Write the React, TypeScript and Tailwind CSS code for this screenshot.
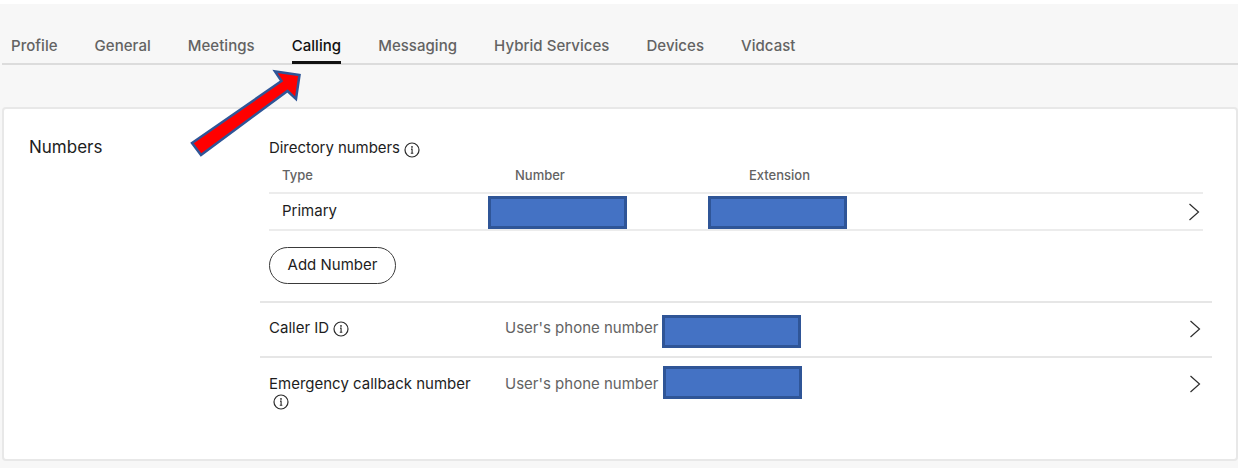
const tabs = ['Profile', 'General', 'Meetings', 'Calling', 'Messaging', 'Hybrid Services', 'Devices', 'Vidcast']

function InfoIcon({ className = '' }: { className?: string }) {
  return (
    <svg width="16" height="16" viewBox="0 0 16 16" fill="none" className={className}>
      <circle cx="8" cy="8" r="7" stroke="#2b2b2b" strokeWidth="1.2" />
      <circle cx="8" cy="4.9" r="0.9" fill="#2b2b2b" />
      <path d="M7 7.1h1.1v4M6.8 11.2h2.5" stroke="#2b2b2b" strokeWidth="1.1" />
    </svg>
  )
}

function Chevron() {
  return (
    <svg width="12" height="18" viewBox="0 0 12 18" fill="none">
      <path d="M1.5 1l9 8-9 8" stroke="#2d2d2d" strokeWidth="1.2" />
    </svg>
  )
}

function Redacted({ className = '' }: { className?: string }) {
  return <div className={`h-[33px] w-[139px] border-[3px] border-[#2f5597] bg-[#4472c4] ${className}`} />
}

export default function App() {
  return (
    <div className="relative h-[468px] overflow-hidden bg-white pt-1 font-['Inter',sans-serif] text-[15px] text-[#1d1d1d]">
      <div className="h-[464px] bg-[#f7f7f7] pl-[2px]">
        <nav className="flex h-[61px] gap-[37px] border-b-2 border-[#dcdcdc] pl-[9px] pt-[32px] tracking-[0.04px] text-[#636363]">
          {tabs.map((tab) => (
            <div
              key={tab}
              className={
                tab === 'Calling'
                  ? 'h-[28px] border-b-[3px] border-[#111] leading-[20px] font-medium text-[#111]'
                  : 'leading-[20px] font-medium'
              }
            >
              {tab}
            </div>
          ))}
        </nav>

        <section className="mt-[42px] flex h-[354px] rounded-[4px] border-2 border-[#e8e8e8] bg-white">
          <h2 className="w-[256px] shrink-0 pl-[25px] pt-[26px] text-[17px] leading-[24px]">Numbers</h2>

          <div className="w-[952px] pt-[22px]">
            <div className="pl-[9px] pr-[9px]">
              <div className="flex h-[28px] items-end gap-[4px] leading-[20px]">
                <span className="pb-[1px] tracking-[-0.05px]">Directory numbers</span>
                <InfoIcon className="mb-[1px]" />
              </div>
              <div className="grid h-[33px] grid-cols-[233px_234px_1fr] items-center pl-[13px] text-[13px] font-medium text-[#636363]">
                <span>Type</span>
                <span>Number</span>
                <span>Extension</span>
              </div>
              <div className="flex h-[39px] items-center border-y-2 border-[#ececec] pl-[13px]">
                <span className="mb-[2px] w-[206px] leading-[20px]">Primary</span>
                <Redacted className="mt-[1px]" />
                <Redacted className="ml-[81px] mt-[1px]" />
                <div className="ml-auto pr-[3px] pt-[1px]">
                  <Chevron />
                </div>
              </div>
              <button className="mt-[16px] h-[37px] w-[127px] rounded-full border border-[#3a3a3a] bg-white text-center">
                Add Number
              </button>
            </div>

            <div className="mt-[17px] flex h-[55px] items-start border-t-2 border-[#e6e6e6] pl-[9px] pr-[11px] pt-[15px]">
              <div className="flex w-[236px] items-center gap-[4px] leading-[20px]">
                Caller ID
                <InfoIcon className="mt-[2px]" />
              </div>
              <span className="leading-[20px] text-[#636363]">User's phone number</span>
              <Redacted className="-mt-[3px] ml-[4px]" />
              <div className="ml-auto pt-[2px]">
                <Chevron />
              </div>
            </div>

            <div className="flex items-start border-t-2 border-[#e6e6e6] pl-[9px] pr-[11px] pt-[16px]">
              <div className="w-[236px] leading-[20px]">
                Emergency callback number
                <InfoIcon className="ml-[4px]" />
              </div>
              <span className="leading-[20px] text-[#636363]">User's phone number</span>
              <Redacted className="-mt-[8px] ml-[5px]" />
              <div className="ml-auto pt-[1px]">
                <Chevron />
              </div>
            </div>
          </div>
        </section>
      </div>

      <svg width="1238" height="468" className="pointer-events-none absolute left-0 top-0">
        <polygon
          points="299.5,75 275,71.5 281.5,81 192,143 201,155 287.5,91 296,99"
          fill="#ff0000"
          stroke="#2f5597"
          strokeWidth="2.5"
        />
      </svg>
    </div>
  )
}
